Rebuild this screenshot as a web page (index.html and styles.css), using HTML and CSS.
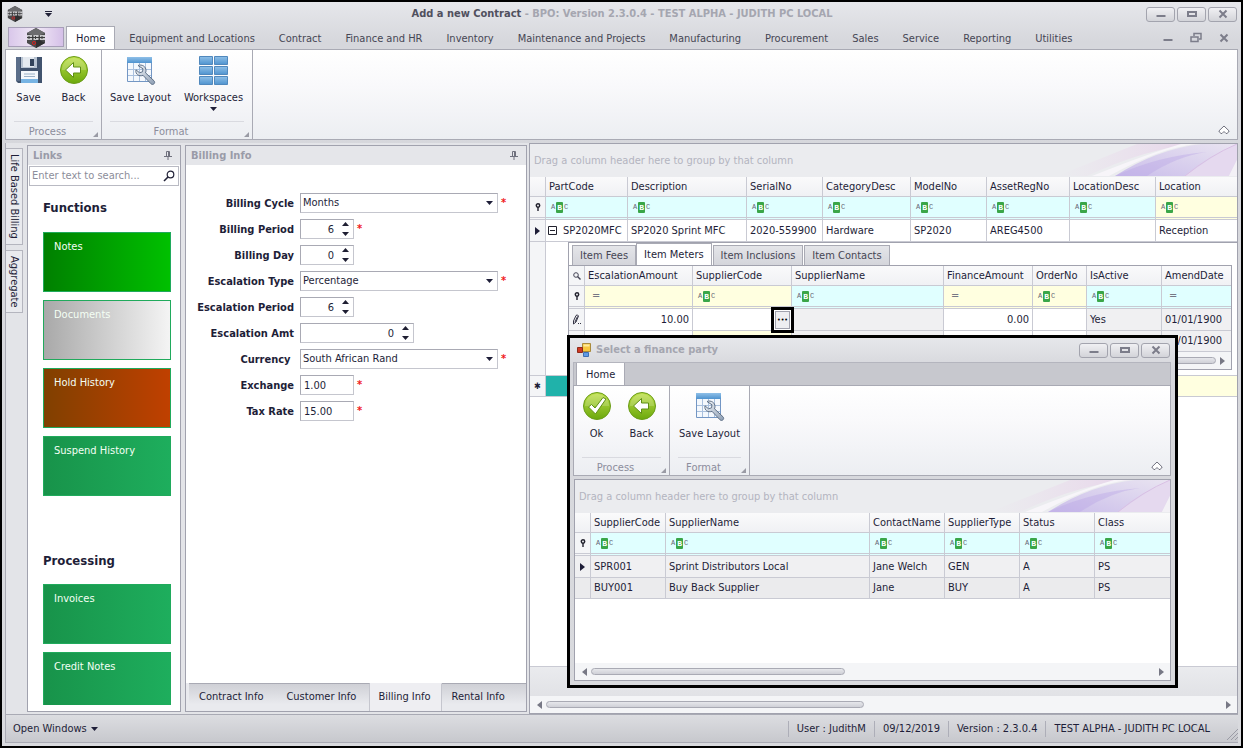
FILE: index.html
```html
<!DOCTYPE html>
<html lang="en">
	<head>
		<meta charset="UTF-8" />
		<meta name="viewport" content="width=device-width, initial-scale=1.0" />
		<title>Add a new Contract - BPO</title>
		<link rel="stylesheet" href="styles.css">
	</head>
	<body>
		<!-- Icon sprite -->
		<svg class="sprite" width="0" height="0" aria-hidden="true">
			<defs>
				<linearGradient id="g-green" x1="0" y1="0" x2="0" y2="1">
					<stop offset="0" stop-color="#bfe04a" />
					<stop offset="1" stop-color="#6ba80c" />
				</linearGradient>
				<linearGradient id="g-blue" x1="0" y1="0" x2="0" y2="1">
					<stop offset="0" stop-color="#8fc0e8" />
					<stop offset="1" stop-color="#4f93cf" />
				</linearGradient>
				<linearGradient id="g-steel" x1="0" y1="0" x2="1" y2="1">
					<stop offset="0" stop-color="#f4f7fa" />
					<stop offset="1" stop-color="#8c9db3" />
				</linearGradient>
				<linearGradient id="g-purple" x1="0" y1="1" x2="1" y2="0">
					<stop offset="0" stop-color="#cabdea" />
					<stop offset="1" stop-color="#e9e4f1" />
				</linearGradient>
				<linearGradient id="g-pink" x1="0" y1="0" x2="1" y2="0">
					<stop offset="0" stop-color="#ead6ea" stop-opacity="0" />
					<stop offset="1" stop-color="#e6cbe9" />
				</linearGradient>
			</defs>
			<symbol id="logo" viewBox="0 0 20 20">
				<path d="M10 0l9 5v10l-9 5-9-5V5z" fill="#4a4a4c" />
				<path d="M10 0l9 5-9 4-9-4z" fill="#6b6b6e" />
				<path d="M10 10l9 5-9 5z" fill="#2f2f31" />
				<path d="M1 7h5v5H1zM7.500 7h5v5h-5zM14 7h5v5h-5z" fill="#c9c9cc" />
				<path d="M1 9.500h18M3 8v3M9.500 8v3M16 8v3" stroke="#3a3a3c" />
				<circle cx="8" cy="15" r="1.600" fill="none" stroke="#d02020" />
			</symbol>
			<symbol id="save" viewBox="0 0 28 28">
				<path d="M1 1h26v26H3l-2-2z" fill="#41536e" />
				<path d="M6 1h16v11H6z" fill="#b9c4d2" />
				<path d="M8 1h11v10H8z" fill="#e4e9ef" />
				<path d="M15 3h4v7h-4z" fill="#33435b" />
				<path d="M6 15h17v12H6z" fill="#f3f7fb" />
				<path d="M6 23h17v4H6z" fill="#77b4e4" />
				<path d="M9 18h11M9 20.500h11" stroke="#9ab0c6" />
				<path d="M1 1h4v24H1z" fill="#5a6d89" />
			</symbol>
			<symbol id="back" viewBox="0 0 28 28">
				<circle cx="14" cy="14" r="13.500" fill="url(#g-green)" stroke="#6a9c18" />
				<path d="M2 14a12 12 0 0 1 24 0z" fill="#fff" opacity=".18" />
				<path d="M5.500 14l8-7.500v4.500h7v6h-7v4.500z" fill="#fff" stroke="#5f8f14" />
			</symbol>
			<symbol id="ok" viewBox="0 0 28 28">
				<circle cx="14" cy="14" r="13.500" fill="url(#g-green)" stroke="#6a9c18" />
				<path d="M2 14a12 12 0 0 1 24 0z" fill="#fff" opacity=".18" />
				<path d="M5.500 15l3-2.500 3.500 3.500 8-10.500 3 1.500L12.500 22z" fill="#fff" stroke="#5f8f14" />
			</symbol>
			<symbol id="layout" viewBox="0 0 30 30">
				<path d="M1.500 1.500h24v24h-24z" fill="#f4f8fd" stroke="#7396c4" />
				<path d="M1 1h25v6H1z" fill="url(#g-blue)" />
				<path d="M2 13.500h23M2 19.500h23M7.500 7v18M13.500 7v18M19.500 7v18" stroke="#a9c0de" />
				<path d="M12 9.500c4-1.500 8 1 8 5 0 1-.2 1.500-.5 2.300l8.500 8c2 2-1 5-3 3l-8-8.500c-4 1.500-8-1-7-5.500l3.500 3 3-1 .5-3z" fill="url(#g-steel)" stroke="#5f7087" />
			</symbol>
			<symbol id="workspaces" viewBox="0 0 30 30">
				<g fill="url(#g-blue)" stroke="#5088bd">
					<path d="M.5.5h13v8H.5z" /><path d="M15.500.5h13v8h-13z" />
					<path d="M.5 10.500h13v8H.5z" /><path d="M15.500 10.500h13v8h-13z" />
					<path d="M.5 20.500h13v8H.5z" /><path d="M15.500 20.500h13v8h-13z" />
				</g>
			</symbol>
			<symbol id="form" viewBox="0 0 14 14">
				<path d="M5.500.5h8v8h-8z" fill="#f8c73e" stroke="#a98a3c" />
				<path d="M.5 4.500h5v5h-5z" fill="#cf3a24" stroke="#8f2a1a" />
				<path d="M6.500 9.500h5v4h-5z" fill="#5f9be6" stroke="#3f6fb4" />
				<path d="M6.500 1.500h6v2h-6z" fill="#fde9a0" />
			</symbol>
			<symbol id="min" viewBox="0 0 12 12"><path d="M1.500 8h9" stroke="#7c7d8a" stroke-width="2" /></symbol>
			<symbol id="max" viewBox="0 0 12 12"><path d="M2 4h8v4H2z" fill="none" stroke="#7c7d8a" stroke-width="2" /></symbol>
			<symbol id="restore" viewBox="0 0 12 12">
				<path d="M4 4V1.500h7V7H9" fill="none" stroke="#7c7d8a" stroke-width="1.500" />
				<path d="M1 5h7v4.500H1z" fill="none" stroke="#7c7d8a" stroke-width="1.500" />
			</symbol>
			<symbol id="close" viewBox="0 0 12 12"><path d="M2.500 2.500l7 7M9.500 2.500l-7 7" stroke="#7c7d8a" stroke-width="2" /></symbol>
			<symbol id="collapse" viewBox="0 0 12 10"><path d="M.8 6L6 1l5.200 5-2 2.500H8L6 6.500l-2 2H2.800z" fill="#fff" stroke="#70717e" /></symbol>
			<symbol id="pin" viewBox="0 0 8 9"><path d="M2.500 5V.5h3V5M0 5.500h8M4 6v3" fill="none" stroke="#70717e" /><path d="M4 1h2v4H4z" fill="#70717e" /></symbol>
			<symbol id="search" viewBox="0 0 12 12"><path d="M1 11l4-4" stroke="#222238" stroke-width="1.600" /><circle cx="7.500" cy="4.500" r="3.300" fill="none" stroke="#222238" stroke-width="1.200" /></symbol>
			<symbol id="find" viewBox="0 0 8 8"><circle cx="3" cy="3" r="2.300" fill="none" stroke="#444455" /><path d="M4.500 4.500l3 3" stroke="#444455" stroke-width="1.400" /></symbol>
			<symbol id="filter" viewBox="0 0 6 8"><circle cx="3" cy="2.500" r="1.700" fill="none" stroke="#22222e" stroke-width="1.500" /><path d="M3 4v4" stroke="#22222e" stroke-width="1.400" /></symbol>
			<symbol id="edit" viewBox="0 0 9 11"><path d="M1.500 7L4 1.500q1.500-1.500 2.500.5L4 8l-2.500 2zM3 8l2.500-5.500M6 9.500h1M8 9.500h1" fill="none" stroke="#333344" /></symbol>
			<symbol id="right" viewBox="0 0 5 8"><path d="M0 0l5 4-5 4z" fill="currentColor" /></symbol>
			<symbol id="left" viewBox="0 0 5 8"><path d="M5 0L0 4l5 4z" fill="currentColor" /></symbol>
			<symbol id="down" viewBox="0 0 7 4"><path d="M0 0h7L3.500 4z" fill="currentColor" /></symbol>
			<symbol id="quick" viewBox="0 0 7 6"><path d="M0 .5h7" stroke="#222238" /><path d="M0 2h7L3.500 6z" fill="#222238" /></symbol>
			<symbol id="spin" viewBox="0 0 7 14"><path d="M0 4h7L3.500 0zM0 10h7l-3.500 4z" fill="#1e1e32" /></symbol>
			<symbol id="minus" viewBox="0 0 9 9"><path d="M.5.5h8v8h-8zM2 4.500h5" fill="none" stroke="#22222e" /></symbol>
			<symbol id="corner" viewBox="0 0 5 5"><path d="M5 0v5H0z" fill="#9a9ba5" /></symbol>
			<symbol id="grip" viewBox="0 0 11 11"><path d="M0 11L11 0M4 11l7-7M8 11l3-3" stroke="#9a9ba5" /></symbol>
			<symbol id="swoosh" viewBox="0 0 240 32">
				<path d="M90 32Q150 4 200 0h-60Q110 12 60 32z" fill="url(#g-pink)" opacity=".7" />
				<path d="M112 32Q165 3 200 0h-16Q150 10 95 32z" fill="#f7f5f9" />
				<path d="M118 32Q160 5 205 0h35L188 32z" fill="url(#g-purple)" />
				<path d="M118 32Q160 12 210 8Q180 12 150 32z" fill="#b9a6e6" opacity=".4" />
				<path d="M188 32Q215 12 240 0v16l-8 16z" fill="#e5d9ef" />
				<path d="M232 32l8-16v16z" fill="#f3f1f6" />
				<path d="M188 32Q212 12 240 0" fill="none" stroke="#d9bfe4" />
			</symbol>
		</svg>

		<div class="window">
			<header class="titlebar">
				<div class="quick">
					<svg width="16" height="16"><use href="#logo" /></svg>
					<svg width="7" height="6"><use href="#quick" /></svg>
				</div>
				<h1><b>Add a new Contract</b> - BPO: Version 2.3.0.4 - TEST ALPHA - JUDITH PC LOCAL</h1>
				<div class="controls">
					<button aria-label="Minimize"><svg width="12" height="12"><use href="#min" /></svg></button>
					<button aria-label="Maximize"><svg width="12" height="12"><use href="#max" /></svg></button>
					<button aria-label="Close"><svg width="12" height="12"><use href="#close" /></svg></button>
				</div>
			</header>

			<nav class="tabs">
				<button class="app-button" aria-label="Application menu"><svg width="20" height="20"><use href="#logo" /></svg></button>
				<a class="active" href="#">Home</a>
				<a href="#">Equipment and Locations</a>
				<a href="#">Contract</a>
				<a href="#">Finance and HR</a>
				<a href="#">Inventory</a>
				<a href="#">Maintenance and Projects</a>
				<a href="#">Manufacturing</a>
				<a href="#">Procurement</a>
				<a href="#">Sales</a>
				<a href="#">Service</a>
				<a href="#">Reporting</a>
				<a href="#">Utilities</a>
				<div class="mdi">
					<button aria-label="Minimize child"><svg width="12" height="12"><use href="#min" /></svg></button>
					<button aria-label="Restore child"><svg width="12" height="12"><use href="#restore" /></svg></button>
					<button aria-label="Close child"><svg width="12" height="12"><use href="#close" /></svg></button>
				</div>
			</nav>

			<div class="ribbon">
				<div class="ribbon-group">
					<div class="ribbon-buttons">
						<button><svg width="28" height="28"><use href="#save" /></svg>Save</button>
						<button><svg width="28" height="28"><use href="#back" /></svg>Back</button>
					</div>
					<div class="caption">Process<svg width="5" height="5"><use href="#corner" /></svg></div>
				</div>
				<div class="ribbon-group">
					<div class="ribbon-buttons wide">
						<button><svg width="30" height="30"><use href="#layout" /></svg>Save Layout</button>
						<button><svg width="30" height="30"><use href="#workspaces" /></svg>Workspaces<svg class="drop" width="7" height="4"><use href="#down" /></svg></button>
					</div>
					<div class="caption">Format<svg width="5" height="5"><use href="#corner" /></svg></div>
				</div>
				<button class="collapse" aria-label="Collapse ribbon"><svg width="12" height="10"><use href="#collapse" /></svg></button>
			</div>

			<main class="workspace">
				<aside class="side-tabs">
					<button>Life Based Billing</button>
					<button>Aggregate</button>
				</aside>

				<section class="panel links">
					<h2 class="panel-title">Links<svg width="8" height="9"><use href="#pin" /></svg></h2>
					<div class="search">
						<input type="text" aria-label="Search links" placeholder="Enter text to search..." />
						<svg width="12" height="12"><use href="#search" /></svg>
					</div>
					<div class="tiles">
						<h3>Functions</h3>
						<button class="tile notes">Notes</button>
						<button class="tile documents">Documents</button>
						<button class="tile hold">Hold History</button>
						<button class="tile">Suspend History</button>
						<h3 class="second">Processing</h3>
						<button class="tile">Invoices</button>
						<button class="tile">Credit Notes</button>
					</div>
				</section>

				<section class="panel billing">
					<h2 class="panel-title">Billing Info<svg width="8" height="9"><use href="#pin" /></svg></h2>
					<form class="billing-form">
						<label for="cycle">Billing Cycle</label>
						<div class="field required">
							<div class="select"><select id="cycle"><option>Months</option></select><svg width="7" height="4"><use href="#down" /></svg></div>
						</div>
						<label for="period">Billing Period</label>
						<div class="field required">
							<div class="spin"><input type="number" id="period" value="6" /><svg width="7" height="14"><use href="#spin" /></svg></div>
						</div>
						<label for="day">Billing Day</label>
						<div class="field">
							<div class="spin"><input type="number" id="day" value="0" /><svg width="7" height="14"><use href="#spin" /></svg></div>
						</div>
						<label for="esc-type">Escalation Type</label>
						<div class="field required">
							<div class="select"><select id="esc-type"><option>Percentage</option></select><svg width="7" height="4"><use href="#down" /></svg></div>
						</div>
						<label for="esc-period">Escalation Period</label>
						<div class="field">
							<div class="spin"><input type="number" id="esc-period" value="6" /><svg width="7" height="14"><use href="#spin" /></svg></div>
						</div>
						<label for="esc-amt">Escalation Amt</label>
						<div class="field">
							<div class="spin long"><input type="number" id="esc-amt" value="0" /><svg width="7" height="14"><use href="#spin" /></svg></div>
						</div>
						<label for="currency">Currency&nbsp;</label>
						<div class="field required">
							<div class="select"><select id="currency"><option>South African Rand</option></select><svg width="7" height="4"><use href="#down" /></svg></div>
						</div>
						<label for="exchange">Exchange</label>
						<div class="field required"><input type="text" id="exchange" value="1.00" /></div>
						<label for="tax">Tax Rate</label>
						<div class="field required"><input type="text" id="tax" value="15.00" /></div>
					</form>
					<nav class="bottom-tabs">
						<a href="#">Contract Info</a>
						<a href="#">Customer Info</a>
						<a class="active" href="#">Billing Info</a>
						<a href="#">Rental Info</a>
					</nav>
				</section>

				<section class="grid main-grid">
					<div class="group-panel">Drag a column header here to group by that column<svg width="240" height="32"><use href="#swoosh" /></svg></div>
					<table>
						<colgroup>
							<col class="c16" /><col class="c82" /><col class="c119" /><col class="c76" /><col class="c88" />
							<col class="c76" /><col class="c83" /><col class="c86" /><col />
						</colgroup>
						<thead>
							<tr>
								<th></th>
								<th>PartCode</th><th>Description</th><th>SerialNo</th><th>CategoryDesc</th>
								<th>ModelNo</th><th>AssetRegNo</th><th>LocationDesc</th><th>Location</th>
							</tr>
							<tr class="filter">
								<td class="ind"><svg width="6" height="8"><use href="#filter" /></svg></td>
								<td><span class="abc">A<b>B</b>C</span></td>
								<td><span class="abc">A<b>B</b>C</span></td>
								<td><span class="abc">A<b>B</b>C</span></td>
								<td><span class="abc">A<b>B</b>C</span></td>
								<td><span class="abc">A<b>B</b>C</span></td>
								<td><span class="abc">A<b>B</b>C</span></td>
								<td><span class="abc">A<b>B</b>C</span></td>
								<td class="edit"><span class="abc">A<b>B</b>C</span></td>
							</tr>
						</thead>
						<tbody>
							<tr class="first">
								<td class="ind"><svg width="5" height="8"><use href="#right" /></svg></td>
								<td class="tree"><svg width="9" height="9"><use href="#minus" /></svg>SP2020MFC</td>
								<td>SP2020 Sprint MFC</td><td>2020-559900</td><td>Hardware</td>
								<td>SP2020</td><td>AREG4500</td><td></td><td>Reception</td>
							</tr>
							<tr class="detail-row">
								<td class="ind"></td>
								<td colspan="8">
									<div class="detail">
										<nav class="detail-tabs">
											<a href="#">Item Fees</a>
											<a class="active" href="#">Item Meters</a>
											<a href="#">Item Inclusions</a>
											<a href="#">Item Contacts</a>
										</nav>
										<div class="detail-grid">
											<table>
												<colgroup>
													<col class="c16" /><col class="c108" /><col class="c99" /><col class="c152" /><col class="c89" />
													<col class="c54" /><col class="c75" /><col />
												</colgroup>
												<thead>
													<tr>
														<th class="ind"><svg width="8" height="8"><use href="#find" /></svg></th>
														<th>EscalationAmount</th><th>SupplierCode</th><th>SupplierName</th><th>FinanceAmount</th>
														<th>OrderNo</th><th>IsActive</th><th>AmendDate</th>
													</tr>
													<tr class="filter">
														<td class="ind"><svg width="6" height="8"><use href="#filter" /></svg></td>
														<td class="edit"><span class="eq">=</span></td>
														<td class="edit"><span class="abc">A<b>B</b>C</span></td>
														<td><span class="abc">A<b>B</b>C</span></td>
														<td class="edit"><span class="eq">=</span></td>
														<td class="edit"><span class="abc">A<b>B</b>C</span></td>
														<td><span class="abc">A<b>B</b>C</span></td>
														<td><span class="eq">=</span></td>
													</tr>
												</thead>
												<tbody>
													<tr class="first">
														<td class="ind"><svg width="9" height="11"><use href="#edit" /></svg></td>
														<td class="num">10.00</td>
														<td class="picker"><button aria-label="Select supplier">•••</button></td>
														<td class="locked"></td>
														<td class="num">0.00</td><td></td>
														<td class="locked">Yes</td><td class="locked">01/01/1900</td>
													</tr>
													<tr>
														<td class="ind"></td>
														<td></td><td class="edit"></td><td class="locked"></td><td></td><td></td>
														<td class="locked">Yes</td><td class="locked">01/01/1900</td>
													</tr>
												</tbody>
											</table>
											<div class="scrollbar"><svg width="5" height="8"><use href="#left" /></svg><div class="track"><div class="thumb"></div></div><svg width="5" height="8"><use href="#right" /></svg></div>
										</div>
									</div>
								</td>
							</tr>
							<tr class="new-row">
								<td class="ind">✱</td>
								<td class="teal"></td>
								<td colspan="7"></td>
							</tr>
						</tbody>
					</table>
					<div class="grid-space"></div>
					<div class="grid-footer"></div>
					<div class="scrollbar"><svg width="5" height="8"><use href="#left" /></svg><div class="track"><div class="thumb half"></div></div><svg width="5" height="8"><use href="#right" /></svg></div>
				</section>
			</main>

			<footer class="statusbar">
				<button>Open Windows <svg width="7" height="4"><use href="#down" /></svg></button>
				<span class="push">User : JudithM</span>
				<span>09/12/2019</span>
				<span>Version : 2.3.0.4</span>
				<span>TEST ALPHA - JUDITH PC LOCAL</span>
				<svg width="11" height="11"><use href="#grip" /></svg>
			</footer>
		</div>

		<!-- Supplier lookup -->
		<div class="dialog" role="dialog" aria-label="Select a finance party">
			<header class="titlebar">
				<svg width="14" height="14"><use href="#form" /></svg>
				<h2>Select a finance party</h2>
				<div class="controls">
					<button aria-label="Minimize"><svg width="12" height="12"><use href="#min" /></svg></button>
					<button aria-label="Maximize"><svg width="12" height="12"><use href="#max" /></svg></button>
					<button aria-label="Close"><svg width="12" height="12"><use href="#close" /></svg></button>
				</div>
			</header>
			<nav class="tabs">
				<a class="active" href="#">Home</a>
			</nav>
			<div class="ribbon">
				<div class="ribbon-group">
					<div class="ribbon-buttons">
						<button><svg width="28" height="28"><use href="#ok" /></svg>Ok</button>
						<button><svg width="28" height="28"><use href="#back" /></svg>Back</button>
					</div>
					<div class="caption">Process<svg width="5" height="5"><use href="#corner" /></svg></div>
				</div>
				<div class="ribbon-group">
					<div class="ribbon-buttons wide">
						<button><svg width="30" height="30"><use href="#layout" /></svg>Save Layout</button>
					</div>
					<div class="caption">Format<svg width="5" height="5"><use href="#corner" /></svg></div>
				</div>
				<button class="collapse" aria-label="Collapse ribbon"><svg width="12" height="10"><use href="#collapse" /></svg></button>
			</div>
			<section class="grid">
				<div class="group-panel">Drag a column header here to group by that column<svg width="240" height="32"><use href="#swoosh" /></svg></div>
				<table>
					<colgroup>
						<col class="c16" /><col class="c75" /><col class="c204" /><col class="c75" /><col class="c75" /><col class="c75" /><col />
					</colgroup>
					<thead>
						<tr>
							<th></th>
							<th>SupplierCode</th><th>SupplierName</th><th>ContactName</th><th>SupplierType</th><th>Status</th><th>Class</th>
						</tr>
						<tr class="filter">
							<td class="ind"><svg width="6" height="8"><use href="#filter" /></svg></td>
							<td><span class="abc">A<b>B</b>C</span></td>
							<td><span class="abc">A<b>B</b>C</span></td>
							<td><span class="abc">A<b>B</b>C</span></td>
							<td><span class="abc">A<b>B</b>C</span></td>
							<td><span class="abc">A<b>B</b>C</span></td>
							<td><span class="abc">A<b>B</b>C</span></td>
						</tr>
					</thead>
					<tbody>
						<tr class="first locked">
							<td class="ind"><svg width="5" height="8"><use href="#right" /></svg></td>
							<td>SPR001</td><td>Sprint Distributors Local</td><td>Jane Welch</td><td>GEN</td><td>A</td><td>PS</td>
						</tr>
						<tr class="locked alt">
							<td class="ind"></td>
							<td>BUY001</td><td>Buy Back Supplier</td><td>Jane</td><td>BUY</td><td>A</td><td>PS</td>
						</tr>
					</tbody>
				</table>
				<div class="grid-space"></div>
				<div class="scrollbar"><svg width="5" height="8"><use href="#left" /></svg><div class="track"><div class="thumb half"></div></div><svg width="5" height="8"><use href="#right" /></svg></div>
			</section>
		</div>
	</body>
</html>
```
FILE: styles.css
```css
* {
	box-sizing: border-box;
}
body {
	margin: 0;
	font-family: Tahoma, "DejaVu Sans Condensed", "DejaVu Sans", sans-serif;
	font-size: 11px;
	line-height: 14px;
	color: #1e1e38;
	position: relative;
}
h1,
h2,
h3 {
	margin: 0;
	font-size: 11px;
}
button,
input,
select {
	font: inherit;
	color: inherit;
	border: none;
	background: none;
	padding: 0;
	margin: 0;
}
a {
	color: inherit;
	text-decoration: none;
}
svg {
	display: block;
	flex: none;
}
.sprite {
	position: absolute;
}

/* Window frame */
.window {
	height: 100vh;
	min-height: 600px;
	display: flex;
	flex-direction: column;
	border: 2px solid #000;
	padding: 0 3px 3px;
	background: linear-gradient(#e6e7eb, #d6d7dc 40px, #d9dade);
}
.titlebar {
	display: flex;
	align-items: center;
	justify-content: space-between;
	height: 24px;
	padding: 0 1px 0 2px;
	flex: none;
}
.titlebar h1 {
	color: #a5a6b0;
}
.titlebar h1 b {
	color: #50505e;
}
.quick,
.controls {
	display: flex;
	align-items: center;
	width: 91px;
}
.quick {
	gap: 22px;
}
.controls {
	gap: 2px;
}
.controls button {
	width: 29px;
	height: 15px;
	border: 1px solid #a3a4ae;
	border-radius: 3px;
	background: linear-gradient(#f0f0f3, #d3d4d9);
	display: flex;
	align-items: center;
	justify-content: center;
}

/* Ribbon */
.tabs {
	display: flex;
	height: 23px;
	padding-left: 3px;
	color: #464654;
	flex: none;
}
.tabs a {
	padding: 6px 12px 0;
	white-space: nowrap;
}
.tabs a.active {
	background: #fff;
	border: 1px solid #a9aab4;
	border-bottom: none;
	padding: 5px 9px 0;
	margin-right: 2px;
	color: #1e1e38;
}
.app-button {
	width: 56px;
	height: 20px;
	margin: 1px 2px 0 0;
	border: 1px solid #a79fb8;
	background: linear-gradient(90deg, #d9c7ea, #f1e9f6 50%, #d5c0e8);
	display: flex;
	justify-content: center;
}
.mdi {
	display: flex;
	align-items: center;
	gap: 16px;
	margin-left: auto;
	padding-right: 8px;
}
.ribbon {
	display: flex;
	height: 91px;
	border: 1px solid #a9aab4;
	background: linear-gradient(#fff, #f9f9fb 40%, #eceef2);
	flex: none;
	margin-bottom: 3px;
}
.ribbon-group {
	display: flex;
	flex-direction: column;
	justify-content: space-between;
	border-right: 1px solid #a9aab4;
}
.ribbon-buttons {
	display: flex;
	padding: 6px 5px 0 0;
}
.ribbon-buttons button {
	width: 45px;
	display: flex;
	flex-direction: column;
	align-items: center;
	white-space: nowrap;
}
.ribbon-buttons.wide {
	padding: 6px 2px 0;
}
.ribbon-buttons.wide button {
	width: 73px;
}
.ribbon-buttons svg {
	margin-bottom: 7px;
}
.ribbon-buttons.wide svg {
	margin-bottom: 5px;
}
.ribbon-buttons.wide .drop {
	margin: 2px 0 0;
}
.caption {
	position: relative;
	margin: 0 8px;
	padding: 3px 12px 0 0;
	border-top: 1px solid #d9dae0;
	text-align: center;
	color: #8c8d9c;
}
.caption svg {
	position: absolute;
	right: -5px;
	bottom: 2px;
}
.collapse {
	margin: auto 7px 4px auto;
}

/* Workspace */
.workspace {
	flex: 1;
	min-height: 0;
	display: flex;
	gap: 4px;
	border-left: 1px solid #a9aab4;
	background: #e3e4e8;
}
.side-tabs {
	display: flex;
	flex-direction: column;
	gap: 5px;
	width: 17px;
	padding-top: 5px;
}
.side-tabs button {
	writing-mode: vertical-rl;
	border: 1px solid #b4b5be;
	border-left: none;
	padding: 5px 0;
	background: #e9eaee;
	line-height: 15px;
}
.panel {
	display: flex;
	flex-direction: column;
	margin: 2px 0;
	border: 1px solid #a1a2ae;
	background: #fff;
}
.panel-title {
	display: flex;
	align-items: center;
	justify-content: space-between;
	height: 19px;
	padding: 0 8px 0 5px;
	background: #e5e6ea;
	color: #9a9ba8;
	flex: none;
}
.links {
	width: 154px;
}
.search {
	display: flex;
	align-items: center;
	height: 20px;
	margin: 1px;
	padding: 0 3px 0 2px;
	border: 1px solid #b9bac3;
	flex: none;
}
.search input {
	flex: 1;
	min-width: 0;
	outline: none;
}
.search input::placeholder {
	color: #8c8d9a;
	opacity: 1;
}
.tiles {
	flex: 1;
	min-height: 0;
	overflow: hidden;
	margin: 0 9px 6px 15px;
}
.tiles h3 {
	font-size: 13px;
	line-height: 16px;
	margin: 13px 0 16px;
}
.tiles h3.second {
	margin-top: 57px;
	margin-bottom: 15px;
}
.tile {
	display: block;
	width: 100%;
	height: 60px;
	margin-bottom: 8px;
	padding: 0 0 30px 10px;
	text-align: left;
	color: #f4fff4;
	border: 1px solid #20aa5c;
	background: linear-gradient(90deg, #18934a, #1eae5d);
}
.tile.notes {
	background: linear-gradient(90deg, #008000, #00c000);
}
.tile.documents {
	background: linear-gradient(90deg, #a9a9a9, #f4f4f4);
}
.tile.hold {
	background: linear-gradient(90deg, #804000, #c04000);
}
.billing {
	width: 342px;
}
.billing-form {
	flex: 1;
	display: grid;
	grid-template-columns: 108px 1fr;
	grid-auto-rows: 20px;
	align-content: start;
	gap: 6px;
	padding-top: 28px;
}
.billing-form label {
	text-align: right;
	font-weight: bold;
	line-height: 22px;
}
.field {
	display: flex;
}
.field.required::after {
	content: "*";
	color: #f01818;
	line-height: 20px;
	font-weight: bold;
	margin-left: 3px;
}
.field input,
.field select {
	width: 54px;
	height: 20px;
	border: 1px solid #a9aab4;
	border-right-color: #c5c6ce;
	border-bottom-color: #c5c6ce;
	background: #fff;
	padding: 0 3px;
	appearance: none;
	-moz-appearance: textfield;
}
.field input::-webkit-inner-spin-button {
	display: none;
}
.select,
.spin {
	position: relative;
}
.field .select select {
	width: 198px;
	padding: 0 2px;
}
.field .spin input {
	text-align: right;
	padding-right: 19px;
}
.field .spin.long input {
	width: 114px;
}
.select svg {
	position: absolute;
	right: 5px;
	top: 8px;
}
.spin svg {
	position: absolute;
	right: 5px;
	top: 3px;
}
.bottom-tabs {
	display: flex;
	height: 28px;
	padding-left: 3px;
	background: #e9eaee;
}
.bottom-tabs a {
	padding: 6px 13px 0 10px;
	border-top: 1px solid #a9aab4;
	border-right: 1px solid #c5c6ce;
	background: linear-gradient(#cfd0d6, #e9eaee 75%);
}
.bottom-tabs a:first-child {
	border-right: none;
}
.bottom-tabs a.active {
	border-top-color: #eeeef2;
	background: #eeeef2;
	padding: 6px 10px 0 8px;
}
.bottom-tabs a:last-child {
	flex: 1;
	border-right: none;
}

/* Grids */
.grid {
	display: flex;
	flex-direction: column;
	min-width: 0;
	border: 1px solid #a1a2ae;
	background: #fff;
}
.main-grid {
	flex: 1;
	margin-left: -2px;
}
.group-panel {
	position: relative;
	height: 33px;
	padding: 10px 4px;
	background: #ebecef;
	color: #b3b4bf;
	flex: none;
}
.group-panel svg {
	position: absolute;
	right: 0;
	top: 0;
}
.grid table {
	width: 100%;
	table-layout: fixed;
	border-collapse: separate;
	border-spacing: 0;
	flex: none;
}
.c16 { width: 16px; }
.c54 { width: 54px; }
.c75 { width: 75px; }
.c76 { width: 76px; }
.c82 { width: 82px; }
.c83 { width: 83px; }
.c86 { width: 86px; }
.c88 { width: 88px; }
.c89 { width: 89px; }
.c99 { width: 99px; }
.c108 { width: 108px; }
.c119 { width: 119px; }
.c152 { width: 152px; }
.c204 { width: 204px; }
th,
td {
	height: 21px;
	padding: 0 3px;
	border-right: 1px solid #c9cad3;
	border-bottom: 1px solid #c9cad3;
	text-align: left;
	font-weight: normal;
	white-space: nowrap;
}
th {
	background: linear-gradient(#fafafb, #f0f1f4);
	height: 20px;
}
th:last-child,
td:last-child {
	border-right: none;
}
td.ind,
th.ind {
	padding: 0;
	background: #f4f5f7;
	text-align: center;
}
.ind svg {
	margin: 0 auto;
}
.filter td {
	height: 23px;
	border-bottom: 3px double #c9cad3;
	background: #e0ffff;
}
.filter td.ind {
	background: #f4f5f7;
}
td.edit,
.filter td.edit {
	background: #ffffe0;
}
.first td {
	height: 22px;
}
td.num {
	text-align: right;
}
td.locked,
.locked td {
	background: #f0f0f2;
}
.locked.alt td {
	background: #ebebed;
}
.abc {
	display: flex;
	align-items: center;
	gap: 1px;
	margin-left: 2px;
	font: 7px/9px "Liberation Mono", monospace;
	color: #666673;
}
.abc b {
	padding: 1px;
	border-radius: 1px;
	background: #3aa648;
	color: #fff;
	font-size: 8px;
}
.eq {
	padding-left: 4px;
	color: #777784;
}
.tree svg {
	display: inline-block;
	margin: 0 6px 0 -1px;
	vertical-align: -1px;
}
.detail-row > td {
	padding: 0;
	height: auto;
}
.detail {
	margin-left: 22px;
	border: 1px solid #a1a2ae;
	border-right: none;
	border-bottom: none;
	padding: 0 5px 5px 0;
}
.detail-tabs {
	display: flex;
	align-items: flex-end;
	height: 22px;
	padding-left: 3px;
}
.detail-tabs a {
	height: 20px;
	padding: 3px 7px 0;
	margin-right: 1px;
	border: 1px solid #a9aab4;
	border-bottom: none;
	background: linear-gradient(#e4e5e9, #d4d5db);
	color: #464654;
}
.detail-tabs a.active {
	height: 22px;
	padding-top: 4px;
	background: #fff;
	color: #1e1e38;
	margin-left: -1px;
}
.detail-grid {
	border: 1px solid #a1a2ae;
	border-left: none;
}
.picker {
	position: relative;
}
.picker button {
	position: absolute;
	right: -3px;
	top: -2px;
	width: 23px;
	height: 26px;
	border: 3px solid #000;
	background: #eeeef1;
	box-shadow: inset 0 0 0 1px #fff, inset 0 0 0 2px #a1a2ae;
	color: #000;
	font-size: 7px;
	line-height: 18px;
}
.new-row td {
	background: #ffffe0;
}
.new-row td.teal {
	background: #20b2aa;
}
.new-row td.ind {
	background: #f4f5f7;
	font-size: 9px;
}
.grid-space {
	flex: 1;
}
.grid-footer {
	height: 30px;
	border-top: 1px solid #c9cad3;
	background: linear-gradient(#eaebee, #e1e2e6);
	flex: none;
}
.scrollbar {
	display: flex;
	align-items: center;
	gap: 4px;
	height: 17px;
	padding: 0 6px 0 7px;
	background: #f4f5f7;
	color: #777885;
	flex: none;
}
.track {
	flex: 1;
}
.thumb {
	height: 7px;
	border: 1px solid #a9aab4;
	border-radius: 4px;
	background: linear-gradient(#e6e7eb, #cfd0d7);
}
.thumb.half {
	width: 47%;
}

/* Status bar */
.statusbar {
	display: flex;
	align-items: center;
	height: 29px;
	padding-left: 7px;
	border: 1px solid #a9aab4;
	border-right: none;
	background: linear-gradient(#dcdde1, #c7c8cd);
	flex: none;
}
.statusbar button {
	display: flex;
	align-items: center;
	gap: 4px;
}
.statusbar span {
	padding: 1px 8px;
	border-left: 1px solid #adaeb8;
}
.statusbar .push {
	margin-left: auto;
}
.statusbar > svg {
	margin: 12px 0 0 9px;
}

/* Lookup dialog */
.dialog {
	position: absolute;
	left: 567px;
	top: 335px;
	width: 611px;
	height: 353px;
	display: flex;
	flex-direction: column;
	border: 3px solid #000;
	padding: 0 4px 4px 3px;
	background: linear-gradient(#e6e7eb, #d6d7dc 30px, #d9dade);
}
.dialog .titlebar {
	justify-content: flex-start;
	gap: 5px;
	padding: 0 1px 0 4px;
}
.dialog .titlebar h2 {
	flex: 1;
	color: #a5a6b0;
}
.dialog .tabs {
	background: #c7c8ce;
	border: 1px solid #b4b5be;
	border-bottom: none;
	padding-left: 2px;
}
.dialog .tabs a.active {
	border-top: none;
}
.dialog .ribbon-buttons.wide button {
	width: 75px;
}
.dialog .grid {
	flex: 1;
	min-height: 0;
	margin-left: 1px;
}
.dialog .thumb.half {
	width: 45%;
}
```
